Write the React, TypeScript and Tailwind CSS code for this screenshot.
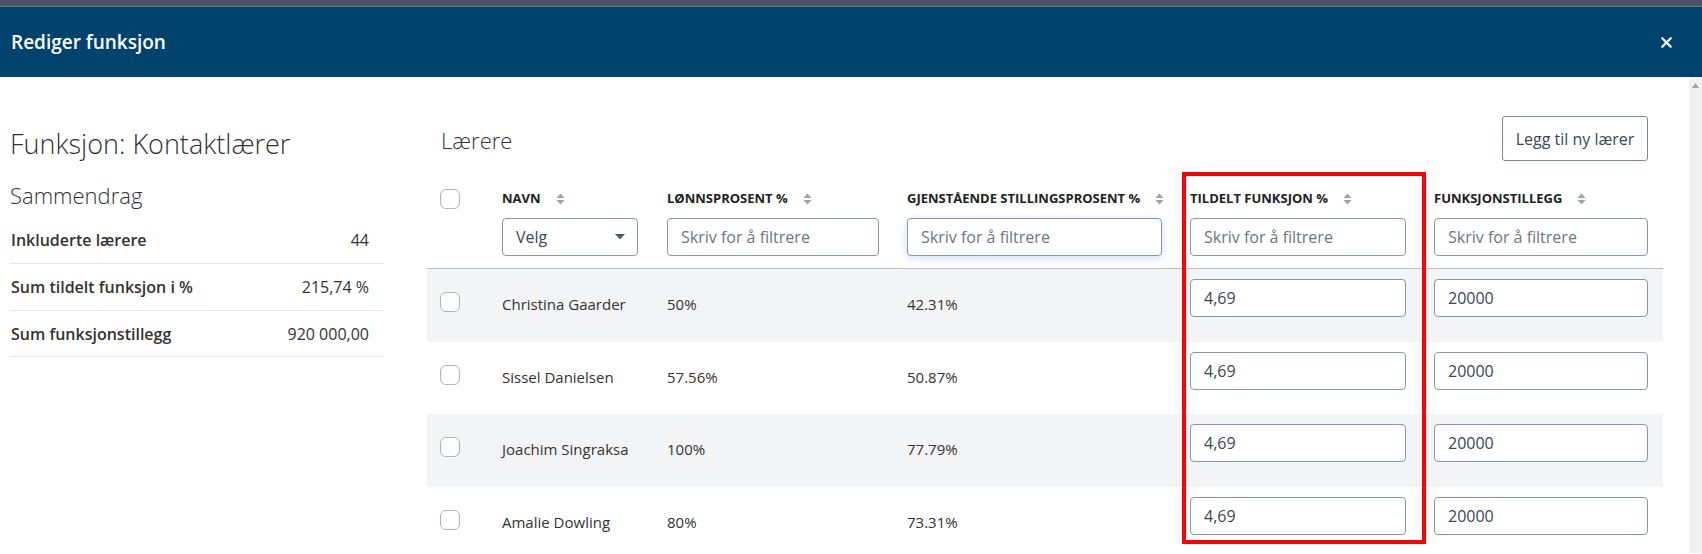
import { X } from "lucide-react";

const font = { fontFamily: '"Open Sans", "Liberation Sans", sans-serif' };

interface Larer {
  navn: string;
  lonn: string;
  gjenstaende: string;
  tildelt: string;
  tillegg: string;
}

const larere: Larer[] = [
  { navn: "Christina Gaarder", lonn: "50%", gjenstaende: "42.31%", tildelt: "4,69", tillegg: "20000" },
  { navn: "Sissel Danielsen", lonn: "57.56%", gjenstaende: "50.87%", tildelt: "4,69", tillegg: "20000" },
  { navn: "Joachim Singraksa", lonn: "100%", gjenstaende: "77.79%", tildelt: "4,69", tillegg: "20000" },
  { navn: "Amalie Dowling", lonn: "80%", gjenstaende: "73.31%", tildelt: "4,69", tillegg: "20000" },
];

const grid = "grid grid-cols-[61px_165px_240px_283px_244px_243px]";

function SortIcon() {
  return (
    <svg width="9" height="12" viewBox="0 0 9 12" className="ml-[15px] shrink-0">
      <path d="M4.5 0.5 L8.5 5 L0.5 5 Z" fill="#9aa3ae" />
      <path d="M0.5 7 L8.5 7 L4.5 11.5 Z" fill="#9aa3ae" />
    </svg>
  );
}

function Checkbox() {
  return <div className="h-[20px] w-[20px] rounded-[6px] border border-[#aab3bf] bg-white" />;
}

function HeaderCell({ label, children }: { label: string; children: React.ReactNode }) {
  return (
    <div className="flex flex-col px-[14px]">
      <div className="flex h-[20px] items-center text-[13px] font-bold uppercase text-[#222]">
        <span className="whitespace-nowrap">{label}</span>
        <SortIcon />
      </div>
      <div className="mt-[9px]">{children}</div>
    </div>
  );
}

function FilterInput({ glow }: { glow?: boolean }) {
  return (
    <input
      placeholder="Skriv for å filtrere"
      className={
        glow
          ? "h-[38px] w-full rounded-[4px] border border-[#8a96a5] bg-white px-[13px] text-[16px] text-[#3c4656] placeholder:text-[#6b7683] shadow-[0_2px_8px_rgba(120,160,210,0.35)] outline-none"
          : "h-[38px] w-full rounded-[4px] border border-[#8a96a5] bg-white px-[13px] text-[16px] text-[#3c4656] placeholder:text-[#6b7683] outline-none"
      }
      style={font}
    />
  );
}

function ValueInput({ value }: { value: string }) {
  return (
    <input
      defaultValue={value}
      className="h-[38px] w-full rounded-[4px] border border-[#8a96a5] bg-white px-[13px] text-[16px] text-[#3c4656] outline-none"
      style={font}
    />
  );
}

export default function App() {
  return (
    <div className="relative h-[554px] w-full overflow-hidden bg-white" style={font}>
      <div className="h-[7px] border-b border-[#6e7585] bg-[#4b5366]" />
      <div className="flex h-[70px] items-center justify-between bg-[#00446e] pl-[11px] pr-[27px]">
        <span className="text-[19px] font-semibold text-white">Rediger funksjon</span>
        <X className="h-[17px] w-[17px] text-white" strokeWidth={3} />
      </div>

      <div className="flex">
        <div className="flex flex-1">
          {/* Venstre: sammendrag */}
          <div className="ml-[10px] w-[373px] pt-[50px]">
            <h2 className="text-[27px] font-light leading-[33px] text-[#333]">Funksjon: Kontaktlærer</h2>
            <h3 className="mt-[21px] text-[22px] font-light leading-[28px] text-[#333]">Sammendrag</h3>
            <div className="mt-[8px]">
              <div className="flex h-[47px] items-center justify-between border-b border-[#e3e6ea] pl-[1px] pr-[14px] text-[16px] text-[#333]">
                <span className="font-semibold">Inkluderte lærere</span>
                <span>44</span>
              </div>
              <div className="flex h-[47px] items-center justify-between border-b border-[#e3e6ea] pl-[1px] pr-[14px] text-[16px] text-[#333]">
                <span className="font-semibold">Sum tildelt funksjon i %</span>
                <span>215,74 %</span>
              </div>
              <div className="flex h-[46px] items-center justify-between border-b border-[#e3e6ea] pl-[1px] pr-[14px] text-[16px] text-[#333]">
                <span className="font-semibold">Sum funksjonstillegg</span>
                <span>920 000,00</span>
              </div>
            </div>
          </div>

          {/* Høyre: lærere */}
          <div className="ml-[44px] w-[1236px] pt-[39px]">
            <div className="flex h-[45px] items-center justify-between pl-[14px] pr-[15px]">
              <span className="pt-[3px] text-[22px] font-light text-[#333]">Lærere</span>
              <button className="h-[45px] w-[146px] rounded-[3px] border border-[#7d8896] bg-white text-[16px] text-[#3c4656]">
                Legg til ny lærer
              </button>
            </div>

            <div className={`${grid} mt-[28px] border-b border-[#b9c0c9] pb-[12px]`}>
              <div className="pl-[13px]">
                <Checkbox />
              </div>
              <HeaderCell label="Navn">
                <div className="flex h-[38px] w-[136px] items-center justify-between rounded-[4px] border border-[#8a96a5] bg-white pl-[13px] pr-[12px] text-[16px] text-[#3c4656]">
                  <span>Velg</span>
                  <svg width="10" height="6" viewBox="0 0 10 6">
                    <path d="M0 0 L10 0 L5 5.5 Z" fill="#555d68" />
                  </svg>
                </div>
              </HeaderCell>
              <HeaderCell label="Lønnsprosent %">
                <FilterInput />
              </HeaderCell>
              <div>
                <HeaderCell label="Gjenstående stillingsprosent %">
                  <FilterInput glow />
                </HeaderCell>
              </div>
              <HeaderCell label="Tildelt funksjon %">
                <FilterInput />
              </HeaderCell>
              <div className="pr-[1px]">
                <HeaderCell label="Funksjonstillegg">
                  <FilterInput />
                </HeaderCell>
              </div>
            </div>

            {larere.map((l, i) => (
              <div
                key={l.navn}
                className={`${grid} h-[72.6px] text-[15px] text-[#333] ${i % 2 === 0 ? "bg-[#f3f4f6]" : "bg-white"}`}
              >
                <div className="flex items-center pl-[13px] pb-[6px]">
                  <Checkbox />
                </div>
                <div className="flex items-center px-[14px] pb-[2px]">{l.navn}</div>
                <div className="flex items-center px-[14px] pb-[2px]">{l.lonn}</div>
                <div className="flex items-center px-[14px] pb-[2px]">{l.gjenstaende}</div>
                <div className="px-[14px] pt-[10px]">
                  <ValueInput value={l.tildelt} />
                </div>
                <div className="pl-[14px] pr-[15px] pt-[10px]">
                  <ValueInput value={l.tillegg} />
                </div>
              </div>
            ))}
          </div>
        </div>

        {/* Scrollbar */}
        <div className="flex h-[476px] w-[13px] justify-center bg-[#f1f1f1] pt-[6px]">
          <svg width="7" height="5" viewBox="0 0 7 5">
            <path d="M3.5 0 L7 5 L0 5 Z" fill="#a3a3a3" />
          </svg>
        </div>
      </div>

      {/* Markering */}
      <div className="pointer-events-none absolute left-[1182px] top-[172px] h-[372px] w-[244px] border-4 border-[#ff0000]" />
    </div>
  );
}
